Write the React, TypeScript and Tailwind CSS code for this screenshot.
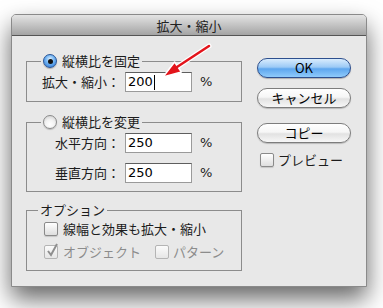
import React from 'react'

function Radio({ checked }: { checked?: boolean }) {
  if (checked) {
    return (
      <span className="shrink-0 w-[14px] h-[14px] rounded-full border border-[#2a5596] bg-[radial-gradient(circle_at_50%_35%,#e2f2ff_0%,#6fb2f2_45%,#2a73d2_100%)] flex items-center justify-center shadow-[0_1px_1px_rgba(0,0,0,0.25)]">
        <span className="w-[5px] h-[5px] rounded-full bg-[#111]" />
      </span>
    )
  }
  return (
    <span className="shrink-0 inline-block w-[14px] h-[14px] rounded-full border border-[#8a8a8a] bg-[radial-gradient(circle_at_50%_70%,#ffffff_0%,#f2f2f2_45%,#c9c9c9_100%)] shadow-[0_1px_1px_rgba(0,0,0,0.2)]" />
  )
}

function Checkbox({ checked, disabled }: { checked?: boolean; disabled?: boolean }) {
  return (
    <span
      className={
        disabled
          ? 'relative shrink-0 inline-block w-[14px] h-[14px] rounded-[2px] border border-[#b4b4b4] bg-gradient-to-b from-[#fbfbfb] to-[#e6e6e6]'
          : 'relative shrink-0 inline-block w-[14px] h-[14px] rounded-[2px] border border-[#8a8a8a] bg-gradient-to-b from-white to-[#dedede] shadow-[0_1px_1px_rgba(0,0,0,0.15)]'
      }
    >
      {checked && (
        <svg className="absolute -top-[3px] left-[1px]" width="13" height="15" viewBox="0 0 13 15">
          <path d="M2 8 L5 12 L11 1" fill="none" stroke="#8e8e8e" strokeWidth="2" />
        </svg>
      )}
    </span>
  )
}

function Field({ value, caret }: { value: string; caret?: boolean }) {
  return (
    <div className="w-[67px] h-[20px] bg-white border border-[#9a9a9a] border-t-[#5e5e5e] flex items-center pl-[2px] font-['DejaVu_Sans',sans-serif] text-[13px] text-black">
      {value}
      {caret && <span className="ml-[1px] w-[1px] h-[15px] bg-black" />}
    </div>
  )
}

function Row({ label, children }: { label: string; children: React.ReactNode }) {
  return (
    <div className="flex items-center h-[20px]">
      <span className="w-[79px] text-right leading-[20px]">{label}</span>
      <div className="ml-[5px]">{children}</div>
      <span className="ml-[8px] font-['DejaVu_Sans',sans-serif] text-[13px]">%</span>
    </div>
  )
}

function AquaButton({ children, primary }: { children: React.ReactNode; primary?: boolean }) {
  return (
    <div
      className={
        primary
          ? 'w-[94px] h-[20px] rounded-full border border-[#2d4f8e] bg-[linear-gradient(to_bottom,#d9ecfd_0%,#9ccaf6_45%,#5ea6ee_55%,#8fcbfb_100%)] flex items-center justify-center text-[13px] text-black shadow-[0_1px_1px_rgba(0,0,0,0.25)]'
          : 'w-[94px] h-[20px] rounded-full border border-[#7d7d7d] bg-[linear-gradient(to_bottom,#ffffff_0%,#f6f6f6_45%,#e2e2e2_55%,#f7f7f7_100%)] flex items-center justify-center text-[13px] text-black shadow-[0_1px_1px_rgba(0,0,0,0.2)]'
      }
    >
      {children}
    </div>
  )
}

export default function App() {
  return (
    <div className="relative w-[383px] h-[308px] overflow-hidden bg-white pl-[11px] pt-[14px] font-['Noto_Sans_CJK_JP','Noto_Sans',sans-serif] text-[13px] text-[#1c1c1c]">
      <div className="w-[356px] h-[273px] flex flex-col rounded-t-[5px] border border-[#8a8a8a] bg-[#e8e8e8] shadow-[0_12px_24px_rgba(0,0,0,0.6)]">

        {/* Title bar */}
        <div className="h-[21px] shrink-0 rounded-t-[4px] border-b border-[#555] bg-gradient-to-b from-[#e4e4e4] to-[#a4a4a4] flex items-center justify-center leading-none text-[13px] text-[#222]">
          拡大・縮小
        </div>

        <div className="flex pl-[14px] pt-[17px]">
          {/* Left column */}
          <div className="w-[216px] flex flex-col">
            <fieldset className="border border-[#8c8c8c] pl-[14px] pt-[3px] pb-[9px]">
              <legend className="px-[2px] h-[16px] flex items-center gap-[5px] leading-[16px]">
                <Radio checked />
                <span>縦横比を固定</span>
              </legend>
              <Row label="拡大・縮小：">
                <Field value="200" caret />
              </Row>
            </fieldset>

            <fieldset className="mt-[12px] border border-[#8c8c8c] pl-[14px] pt-[3px] pb-[8px]">
              <legend className="px-[2px] h-[16px] flex items-center gap-[5px] leading-[16px]">
                <Radio />
                <span>縦横比を変更</span>
              </legend>
              <div className="flex flex-col gap-[10px]">
                <Row label="水平方向：">
                  <Field value="250" />
                </Row>
                <Row label="垂直方向：">
                  <Field value="250" />
                </Row>
              </div>
            </fieldset>

            <fieldset className="mt-[10px] border border-[#8c8c8c] pl-[14px] pt-[2px] pb-[9px]">
              <legend className="-ml-[3px] px-[2px] h-[16px] flex items-center leading-[16px]">
                オプション
              </legend>
              <div className="flex flex-col gap-[5px] pl-[3px]">
                <div className="flex items-center h-[18px] gap-[5px]">
                  <Checkbox />
                  <span>線幅と効果も拡大・縮小</span>
                </div>
                <div className="flex items-center h-[18px]">
                  <Checkbox checked disabled />
                  <span className="ml-[5px] text-[#8c8c8c]">オブジェクト</span>
                  <span className="ml-[14px] flex"><Checkbox disabled /></span>
                  <span className="ml-[4px] text-[#8c8c8c]">パターン</span>
                </div>
              </div>
            </fieldset>
          </div>

          {/* Right column */}
          <div className="ml-[15px] flex flex-col pt-[5px]">
            <AquaButton primary>OK</AquaButton>
            <div className="mt-[10px]"><AquaButton>キャンセル</AquaButton></div>
            <div className="mt-[15px]"><AquaButton>コピー</AquaButton></div>
            <div className="mt-[10px] ml-[3px] flex items-center gap-[4px] h-[14px]">
              <Checkbox />
              <span>プレビュー</span>
            </div>
          </div>
        </div>
      </div>

      {/* Red annotation arrow */}
      <svg className="absolute left-0 top-0 pointer-events-none" width="383" height="308" viewBox="0 0 383 308">
        <line x1="209" y1="46" x2="177" y2="67" stroke="#fff" strokeWidth="5" strokeLinecap="round" />
        <polygon points="163,77 174.6,62 181.4,72" fill="#e3141b" stroke="#fff" strokeWidth="1.5" strokeLinejoin="round" />
        <line x1="209" y1="46" x2="177" y2="67" stroke="#e3141b" strokeWidth="2.5" strokeLinecap="round" />
      </svg>
    </div>
  )
}
